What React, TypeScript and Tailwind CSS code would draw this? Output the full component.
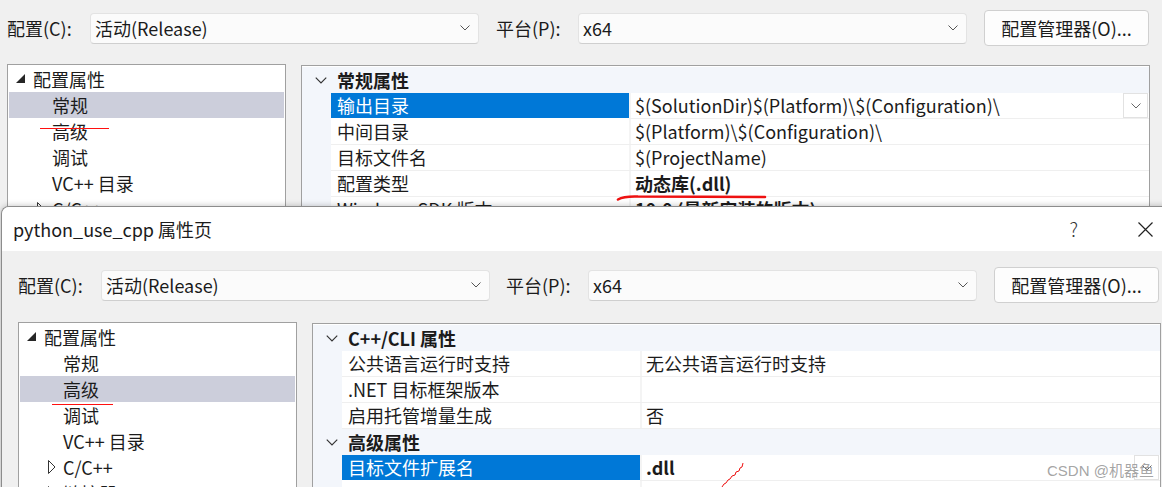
import React from "react";

type TreeItem = { label: string; level: 0 | 1; expander?: "open" | "closed" };

type GridRow =
  | { kind: "header"; label: string }
  | { kind: "row"; name: string; value?: string; bold?: boolean; selected?: boolean };

const Chevron = ({ className = "" }: { className?: string }) => (
  <svg viewBox="0 0 10 6" className={className} fill="none" stroke="currentColor" strokeWidth="1">
    <path d="M0.5 0.5 L5 5 L9.5 0.5" />
  </svg>
);

const OpenTriangle = () => (
  <svg width="9" height="9" viewBox="0 0 9 9">
    <polygon points="9,0 9,9 0,9" fill="#262626" />
  </svg>
);

const ClosedTriangle = () => (
  <svg width="8" height="14" viewBox="0 0 8 14">
    <polygon points="0.5,0.5 7,7 0.5,13.5" fill="#fff" stroke="#333" strokeWidth="1" />
  </svg>
);

function Combo({ value, className }: { value: string; className: string }) {
  return (
    <div
      className={`flex h-[31px] items-center justify-between rounded-[4px] border border-[#e3e3e3] border-b-[#cfcfcf] bg-[#fbfbfb] pl-[4px] pr-[8px] ${className}`}
    >
      <span>{value}</span>
      <Chevron className="h-[6px] w-[10px] text-[#555]" />
    </div>
  );
}

function TopBar({ labelGap }: { labelGap: string }) {
  return (
    <div className="flex items-center">
      <span className="w-[83px] shrink-0">配置(C):</span>
      <Combo value="活动(Release)" className="w-[389px]" />
      <span className={`w-[82px] shrink-0 ${labelGap}`}>平台(P):</span>
      <Combo value="x64" className="w-[389px]" />
      <button className="ml-[17px] h-[36px] w-[165px] shrink-0 rounded-[4px] border border-[#d0d0d0] bg-[#fdfdfd] text-[#1b1b1b]">
        配置管理器(O)...
      </button>
    </div>
  );
}

function Tree({ items, selected, className }: { items: TreeItem[]; selected: number; className: string }) {
  return (
    <div className={`overflow-hidden border border-[#a0a0a0] bg-white p-px ${className}`}>
      {items.map((it, i) => (
        <div
          key={i}
          className={`flex h-[26px] shrink-0 items-center whitespace-nowrap ${i === selected ? "bg-[#cccedb]" : ""}`}
        >
          {it.level === 0 ? (
            <>
              <span className="ml-[7px] flex w-[17px] items-center pb-[2px]">
                <OpenTriangle />
              </span>
              <span>{it.label}</span>
            </>
          ) : (
            <>
              <span className="ml-[28px] flex w-[15px] items-center">
                {it.expander === "closed" && <ClosedTriangle />}
              </span>
              <span>{it.label}</span>
            </>
          )}
        </div>
      ))}
    </div>
  );
}

function PropertyGrid({
  rows,
  className,
  dropdownRight,
}: {
  rows: GridRow[];
  className: string;
  dropdownRight: string;
}) {
  return (
    <div className={`overflow-hidden border border-[#a0a0a0] bg-white pt-px ${className}`}>
      {rows.map((r, i) =>
        r.kind === "header" ? (
          <div key={i} className="flex h-[26px] items-center bg-[#f3f6fb]">
            <span className="flex w-[35px] shrink-0 justify-center pl-[2px]">
              <Chevron className="h-[7px] w-[12px] text-[#333]" />
            </span>
            <span className="font-bold">{r.label}</span>
          </div>
        ) : (
          <div key={i} className="relative flex h-[26px]">
            <span className="w-[29px] shrink-0 bg-[#f3f6fb]" />
            <span
              className={`flex w-[298px] shrink-0 items-center whitespace-nowrap pl-[6px] ${
                r.selected ? "h-[25px] bg-[#0078d7] text-white" : "border-b border-[#efefef]"
              }`}
            >
              {r.name}
            </span>
            <span className="w-[2px] shrink-0 border-b border-[#efefef] bg-[#f4f4f4]" />
            <span
              className={`flex flex-1 items-center whitespace-nowrap border-b border-[#efefef] pl-[4px] ${
                r.bold ? "font-bold" : ""
              }`}
            >
              {r.value}
            </span>
            {r.selected && (
              <span
                className={`absolute top-0 flex h-[25px] w-[25px] items-center justify-center border border-[#e2e2e2] bg-white ${dropdownRight}`}
              >
                <Chevron className="h-[6px] w-[10px] text-[#666]" />
              </span>
            )}
          </div>
        )
      )}
    </div>
  );
}

const backTree: TreeItem[] = [
  { label: "配置属性", level: 0 },
  { label: "常规", level: 1 },
  { label: "高级", level: 1 },
  { label: "调试", level: 1 },
  { label: "VC++ 目录", level: 1 },
  { label: "C/C++", level: 1, expander: "closed" },
];

const backGrid: GridRow[] = [
  { kind: "header", label: "常规属性" },
  { kind: "row", name: "输出目录", value: "$(SolutionDir)$(Platform)\\$(Configuration)\\", selected: true },
  { kind: "row", name: "中间目录", value: "$(Platform)\\$(Configuration)\\" },
  { kind: "row", name: "目标文件名", value: "$(ProjectName)" },
  { kind: "row", name: "配置类型", value: "动态库(.dll)", bold: true },
  { kind: "row", name: "Windows SDK 版本", value: "10.0 (最新安装的版本)", bold: true },
];

const frontTree: TreeItem[] = [
  { label: "配置属性", level: 0 },
  { label: "常规", level: 1 },
  { label: "高级", level: 1 },
  { label: "调试", level: 1 },
  { label: "VC++ 目录", level: 1 },
  { label: "C/C++", level: 1, expander: "closed" },
  { label: "链接器", level: 1, expander: "closed" },
];

const frontGrid: GridRow[] = [
  { kind: "header", label: "C++/CLI 属性" },
  { kind: "row", name: "公共语言运行时支持", value: "无公共语言运行时支持" },
  { kind: "row", name: ".NET 目标框架版本", value: "" },
  { kind: "row", name: "启用托管增量生成", value: "否" },
  { kind: "header", label: "高级属性" },
  { kind: "row", name: "目标文件扩展名", value: ".dll", bold: true, selected: true },
  { kind: "row", name: "", value: "" },
];

export default function App() {
  return (
    <div className="relative h-[487px] w-[1162px] overflow-hidden bg-[#f0f0f0] font-['Noto_Sans_CJK_SC',sans-serif] text-[18px] text-[#1b1b1b]">
      {/* back dialog, mostly hidden under the front one */}
      <div className="h-[207px] overflow-hidden pl-[7px] pt-[10px]">
        <TopBar labelGap="ml-[17px]" />
        <div className="mt-[18px] flex gap-[15px]">
          <Tree items={backTree} selected={1} className="h-[160px] w-[279px]" />
          <PropertyGrid rows={backGrid} className="mt-px h-[160px] w-[849px]" dropdownRight="right-[1px]" />
        </div>
      </div>

      {/* annotations on back dialog */}
      <div className="absolute left-[40px] top-[128px] h-px w-[69px] bg-[#ff1010]" />
      <svg className="absolute left-[612px] top-[190px]" width="160" height="14" viewBox="0 0 160 14">
        <path d="M6 9.5 Q12 6 26 6.5 L153 7" fill="none" stroke="#ee1111" strokeWidth="2.6" strokeLinecap="round" />
      </svg>

      {/* front dialog */}
      <div className="absolute left-px top-[206px] h-[300px] w-[1175px] overflow-hidden rounded-tl-[8px] border-l border-t border-[#8c8c8c] bg-[#f0f0f0] shadow-[0_0_6px_rgba(0,0,0,0.25)]">
        <div className="flex h-[44px] items-center bg-white pl-[11px]">
          <span className="flex-1">python_use_cpp 属性页</span>
          <span className="mr-[60px] text-[19px] font-light text-[#333]">?</span>
          <svg className="mr-[23px]" width="15" height="15" viewBox="0 0 15 15">
            <path d="M0.5 0.5 L14.5 14.5 M14.5 0.5 L0.5 14.5" stroke="#222" strokeWidth="1.2" />
          </svg>
        </div>
        <div className="pl-[16px] pt-[16px]">
          <TopBar labelGap="ml-[16px]" />
          <div className="mt-[19px] flex gap-[15px]">
            <Tree items={frontTree} selected={2} className="h-[200px] w-[279px]" />
            <PropertyGrid rows={frontGrid} className="mt-px h-[200px] w-[849px]" dropdownRight="right-[1px]" />
          </div>
        </div>
      </div>

      {/* annotations on front dialog */}
      <div className="absolute left-[52px] top-[404px] h-px w-[61px] bg-[#ff1010]" />
      <svg className="absolute left-[718px] top-[460px]" width="30" height="28" viewBox="0 0 30 28">
        <polyline
          points="25,3 24,7 22,8 21,11 18,12 17,15 14,16 12,19 10,20 8,23 6,24 4,27"
          fill="none"
          stroke="#ee1111"
          strokeWidth="1"
        />
      </svg>
      <span className="absolute left-[1047px] top-[460px] font-['Liberation_Sans','Noto_Sans_CJK_SC',sans-serif] text-[15px] text-[#9a9a9a]/90">
        CSDN @机器鱼
      </span>
    </div>
  );
}
